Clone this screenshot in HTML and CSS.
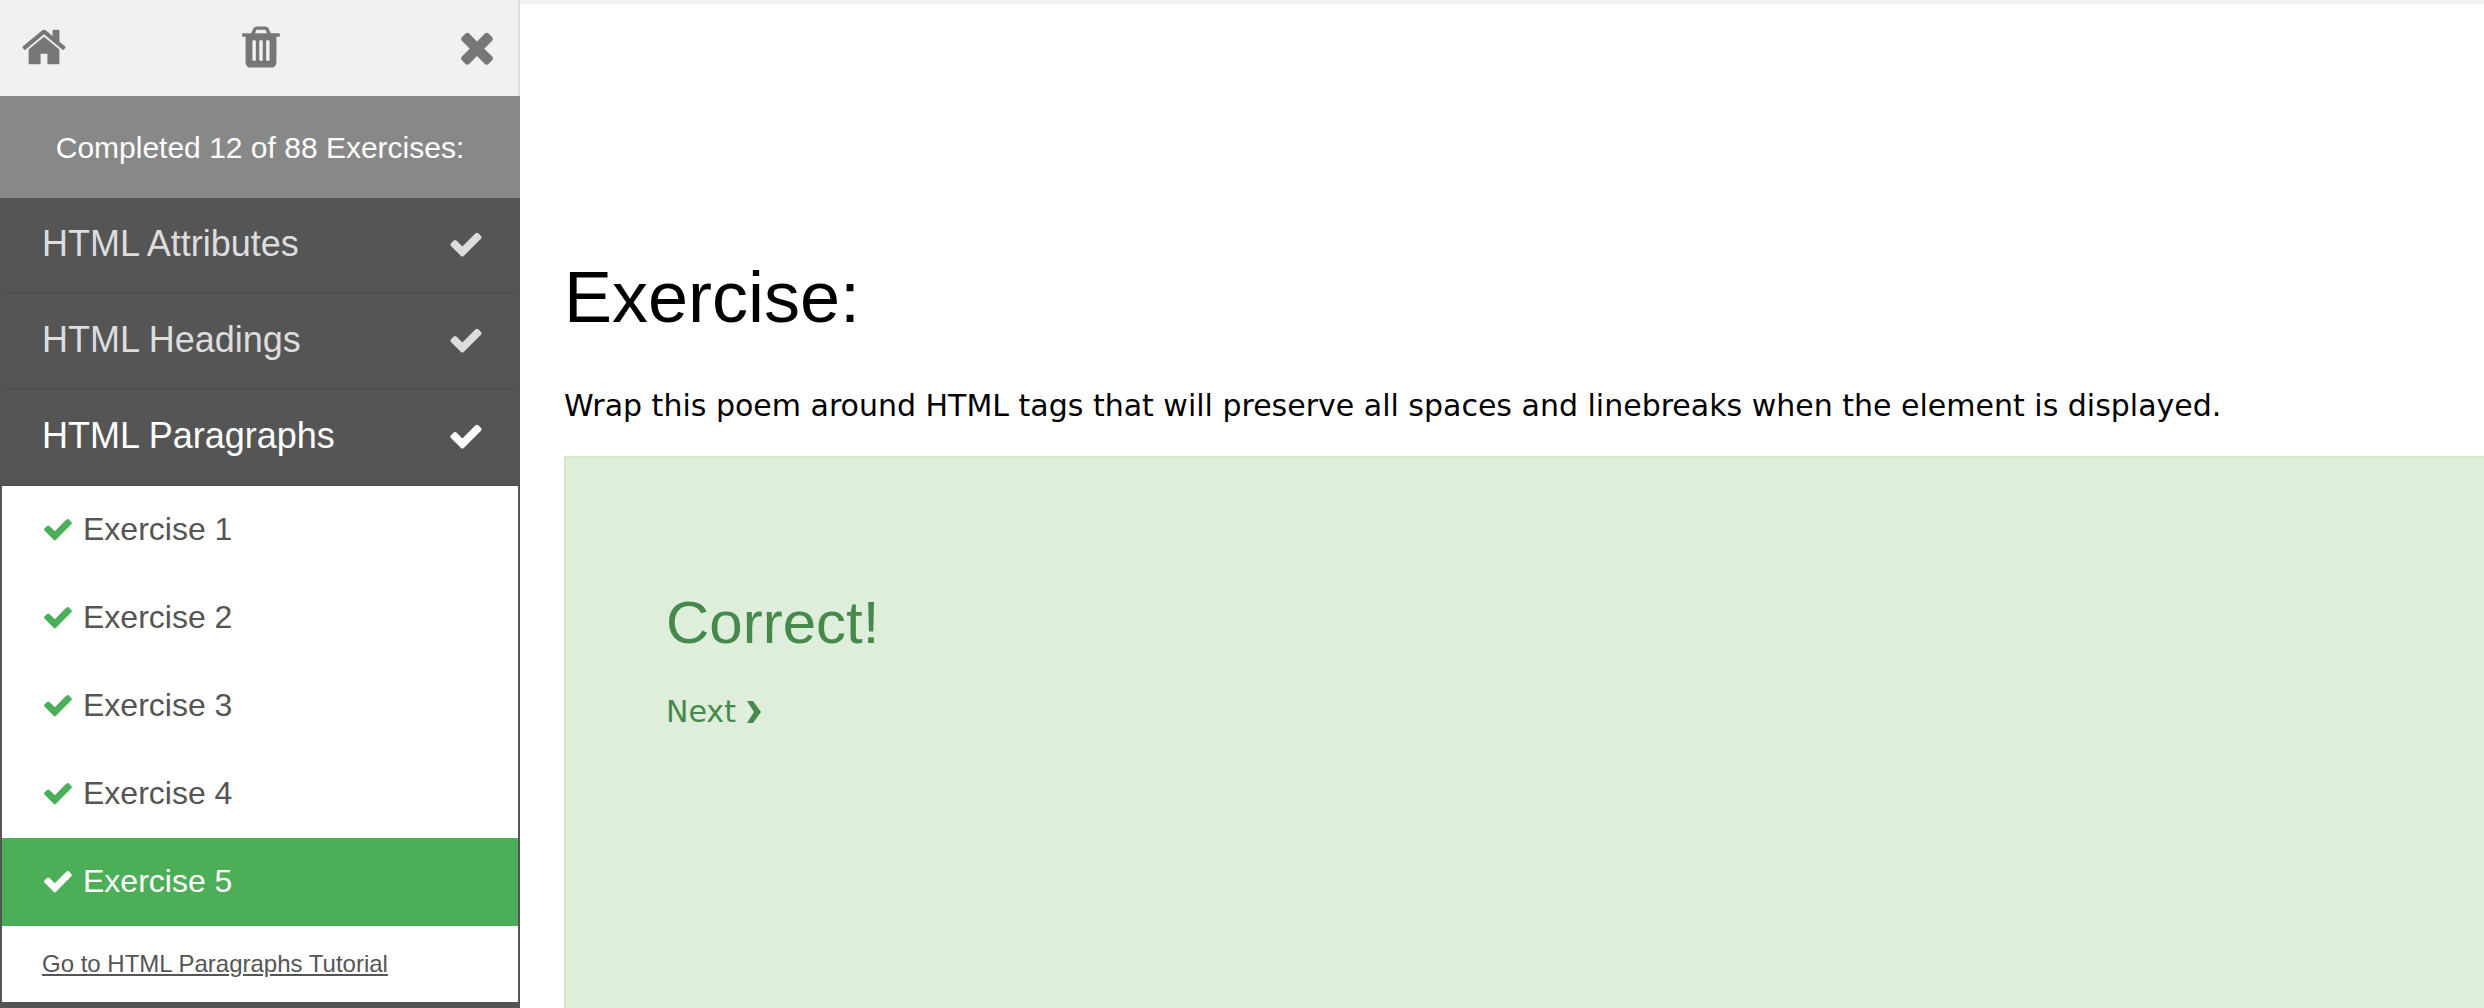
FILE: index.html
```html
<!DOCTYPE html>
<html lang="en">
<head>
<meta charset="utf-8">
<title>HTML Exercises</title>
<link rel="stylesheet" href="styles.css">
</head>
<body>
<svg class="sprite" aria-hidden="true">
  <symbol id="check" viewBox="0 0 1792 1792"><path d="M1671 566q0 40-28 68l-724 724-136 136q-28 28-68 28t-68-28l-136-136-362-362q-28-28-28-68t28-68l136-136q28-28 68-28t68 28l294 295 656-657q28-28 68-28t68 28l136 136q28 28 28 68z"/></symbol>
  <symbol id="home" viewBox="0 0 1792 1792"><path d="M1472 992v480q0 26-19 45t-45 19h-384v-384h-256v384h-384q-26 0-45-19t-19-45v-480q0-1 .5-3t.5-3l575-474 575 474q1 2 1 6zm223-69l-62 74q-8 9-21 11h-3q-13 0-21-7l-692-577-692 577q-12 8-24 7-13-2-21-11l-62-74q-8-10-7-23.5t11-21.5l719-599q32-26 76-26t76 26l244 204v-195q0-14 9-23t23-9h192q14 0 23 9t9 23v408l219 182q10 8 11 21.5t-7 23.5z"/></symbol>
  <symbol id="trash" viewBox="0 0 1792 1792"><path d="M704 1376v-704q0-14-9-23t-23-9h-64q-14 0-23 9t-9 23v704q0 14 9 23t23 9h64q14 0 23-9t9-23zm256 0v-704q0-14-9-23t-23-9h-64q-14 0-23 9t-9 23v704q0 14 9 23t23 9h64q14 0 23-9t9-23zm256 0v-704q0-14-9-23t-23-9h-64q-14 0-23 9t-9 23v704q0 14 9 23t23 9h64q14 0 23-9t9-23zm-544-992h448l-48-117q-7-9-17-11h-317q-10 2-17 11zm928 32v64q0 14-9 23t-23 9h-96v948q0 83-47 143.500t-113 60.500h-832q-66 0-113-58.500t-47-141.500v-952h-96q-14 0-23-9t-9-23v-64q0-14 9-23t23-9h309l70-167q15-37 54-63t79-26h320q40 0 79 26t54 63l70 167h309q14 0 23 9t9 23z"/></symbol>
  <symbol id="close" viewBox="0 0 1792 1792"><path d="M1490 1322q0 40-28 68l-136 136q-28 28-68 28t-68-28l-294-294-294 294q-28 28-68 28t-68-28l-136-136q-28-28-28-68t28-68l294-294-294-294q-28-28-28-68t28-68l136-136q28-28 68-28t68 28l294 294 294-294q28-28 68-28t68 28l136 136q28 28 28 68t-28 68l-294 294 294 294q28 28 28 68z"/></symbol>
  <symbol id="chevron" viewBox="0 0 14 22"><path d="M0 0h6l8 11-8 11h-6l7-11z"/></symbol>
</svg>
<div class="layout">
  <aside class="sidebar">
    <div class="toolbar">
      <a href="#" aria-label="Home"><svg class="tool-icon"><use href="#home"/></svg></a>
      <button type="button" aria-label="Reset exercises"><svg class="tool-icon"><use href="#trash"/></svg></button>
      <button type="button" aria-label="Close menu"><svg class="tool-icon"><use href="#close"/></svg></button>
    </div>
    <div class="progress">Completed 12 of 88 Exercises:</div>
    <nav class="menu">
      <a class="chapter" href="#">HTML Attributes<svg><use href="#check"/></svg></a>
      <a class="chapter" href="#">HTML Headings<svg><use href="#check"/></svg></a>
      <a class="chapter open" href="#">HTML Paragraphs<svg><use href="#check"/></svg></a>
      <div class="exercises">
        <a class="exercise" href="#"><svg><use href="#check"/></svg>Exercise 1</a>
        <a class="exercise" href="#"><svg><use href="#check"/></svg>Exercise 2</a>
        <a class="exercise" href="#"><svg><use href="#check"/></svg>Exercise 3</a>
        <a class="exercise" href="#"><svg><use href="#check"/></svg>Exercise 4</a>
        <a class="exercise current" href="#"><svg><use href="#check"/></svg>Exercise 5</a>
        <a class="tutorial" href="#">Go to HTML Paragraphs Tutorial</a>
      </div>
    </nav>
  </aside>
  <main class="content">
    <h1>Exercise:</h1>
    <p class="task">Wrap this poem around HTML tags that will preserve all spaces and linebreaks when the element is displayed.</p>
    <section class="result">
      <h2>Correct!</h2>
      <a class="next" href="#">Next<svg><use href="#chevron"/></svg></a>
    </section>
  </main>
</div>
</body>
</html>
```
FILE: styles.css
```css
* {
  box-sizing: border-box;
}

body {
  margin: 0;
  background: #fff;
  color: #000;
  font-family: Verdana, "DejaVu Sans", sans-serif;
  font-size: 30px;
}

a {
  color: inherit;
  text-decoration: none;
}

svg {
  display: block;
  flex: none;
  fill: currentColor;
}

.sprite {
  display: none;
}

.layout {
  display: flex;
  height: 100vh;
  overflow: hidden;
}

.sidebar {
  flex: 0 0 520px;
  background: #555;
  font-family: Arial, "Liberation Sans", sans-serif;
}

.toolbar {
  display: flex;
  align-items: center;
  justify-content: space-between;
  height: 96px;
  padding: 0 17px 2px 20px;
  border-right: 2px solid #ddd;
  background: #f1f1f1;
  color: #777;
}

.toolbar button {
  padding: 0;
  border: 0;
  background: none;
  color: inherit;
}

.tool-icon {
  width: 48px;
  height: 48px;
}

.progress {
  height: 102px;
  background: #888;
  color: #fff;
  line-height: 104px;
  text-align: center;
}

.menu {
  padding: 0 2px;
}

.chapter {
  display: flex;
  align-items: center;
  justify-content: space-between;
  height: 96px;
  padding: 0 34px 2px 40px;
  border-bottom: 2px solid #4f4f4f;
  color: #ddd;
  font-size: 36px;
}

.chapter svg {
  width: 36px;
  height: 36px;
}

.chapter.open {
  color: #fff;
}

.exercises {
  background: #fff;
  color: #555;
}

.exercise {
  display: flex;
  align-items: center;
  gap: 9px;
  height: 88px;
  padding: 0 40px 2px;
  font-size: 32px;
}

.exercise svg {
  width: 32px;
  height: 32px;
  color: #4caf57;
}

.exercise.current {
  background: #4caf57;
  color: #fff;
}

.exercise.current svg {
  color: #fff;
}

.tutorial {
  display: block;
  height: 76px;
  padding-left: 40px;
  font-size: 24px;
  line-height: 76px;
  text-decoration: underline;
}

.content {
  display: flex;
  flex: 1;
  flex-direction: column;
  min-width: 0;
  padding-left: 44px;
  border-top: 4px solid #f1f1f1;
}

h1,
h2 {
  margin: 0;
  font-family: Arial, "Liberation Sans", sans-serif;
  font-weight: 400;
}

h1 {
  margin-top: 239px;
  font-size: 72px;
  line-height: 108px;
}

.task {
  margin: 31px 0 26px;
  line-height: 48px;
}

.result {
  flex: 1;
  padding: 120px 100px;
  border: 2px solid #d6e9c6;
  border-width: 2px 0 0 2px;
  background: #dfeeda;
  color: #45894c;
}

h2 {
  margin-bottom: 20px;
  font-size: 60px;
  line-height: 90px;
}

.next {
  display: inline-flex;
  align-items: center;
  gap: 11px;
  line-height: 48px;
}

.next svg {
  width: 14px;
  height: 22px;
}
```
